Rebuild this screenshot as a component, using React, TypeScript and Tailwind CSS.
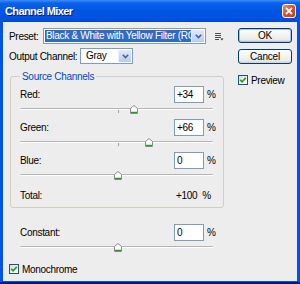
import React from "react";

const FONT = '"Liberation Sans", Arial, sans-serif';

function Thumb({ left }: { left: number }) {
  return (
    <svg
      width="8"
      height="9"
      viewBox="0 0 8 9"
      className="absolute top-[2px]"
      style={{ left: left - 4 }}
    >
      <path d="M0.5 3.5 L4 0.5 L7.5 3.5 V8.5 H0.5 Z" fill="#ffffff" stroke="#8c8c8c" strokeWidth="1" />
      <path d="M1 7.5 H7" stroke="#21a121" strokeWidth="1.5" />
    </svg>
  );
}

function Slider({ value }: { value: number }) {
  const center = 98 + Math.round(value * 0.47);
  return (
    <div className="relative w-[193px] h-[16px]">
      <div className="absolute left-0 right-0 top-[5px] h-[2px] rounded-full border-t border-[#b4b4b4] bg-white" />
      <div className="absolute left-[98px] top-[7px] w-px h-[3px] bg-[#a0a0a0]" />
      <Thumb left={center} />
    </div>
  );
}

function Check({ label }: { label: string }) {
  return (
    <div className="flex items-center h-[10px]">
      <div className="w-[10px] h-[10px] border border-[#1c5180] bg-[linear-gradient(135deg,#dcdcd6,#ffffff)] flex items-center justify-center">
        <svg width="8" height="8" viewBox="0 0 8 8">
          <path d="M1.2 3.8 L3.1 5.8 L6.8 1.8" fill="none" stroke="#21a121" strokeWidth="1.7" />
        </svg>
      </div>
      <span className="ml-[3px] text-[10px] leading-[13px] tracking-[-0.3px] whitespace-nowrap text-black">{label}</span>
    </div>
  );
}

function NumBox({ v }: { v: string }) {
  return (
    <div className="w-[30px] h-[17px] border border-[#7f9db9] bg-white pl-[2px] flex items-center text-[10px] leading-[13px] tracking-[-0.3px]">
      {v}
    </div>
  );
}

function ChannelRow({ label, v, s }: { label: string; v: string; s: number }) {
  return (
    <div>
      <div className="flex items-center h-[17px]">
        <span className="w-[154px] text-[10px] leading-[13px] tracking-[-0.3px]">{label}</span>
        <NumBox v={v} />
        <span className="ml-[3px] text-[10px] leading-[13px]">%</span>
      </div>
      <Slider value={s} />
    </div>
  );
}

function ComboArrow() {
  return (
    <div className="w-[13px] h-full bg-[linear-gradient(to_bottom,#e1eafe,#b7cbf8)] border-l border-[#e8eefc] flex items-center justify-center">
      <svg width="7" height="5" viewBox="0 0 7 5">
        <path d="M0.8 0.8 L3.5 3.5 L6.2 0.8" fill="none" stroke="#4d6185" strokeWidth="1.6" />
      </svg>
    </div>
  );
}

function XPButton({ label, def }: { label: string; def?: boolean }) {
  return (
    <div
      className={
        "w-[54px] h-[15px] rounded-[3px] border border-[#003c74] bg-[linear-gradient(to_bottom,#ffffff,#ecebe6_80%,#d6d0c5)] flex items-center justify-center text-[10px] leading-[13px] tracking-[-0.2px] text-black " +
        (def ? "shadow-[inset_0_0_0_1px_#a9c0ec]" : "")
      }
    >
      {label}
    </div>
  );
}

export default function App() {
  return (
    <div
      className="w-[300px] h-[284px] flex flex-col bg-[#0054e3] border-b-[2px] border-[#00138c]"
      style={{ fontFamily: FONT }}
    >
      {/* Title bar */}
      <div className="h-[22px] flex items-center justify-between pl-[5px] pr-[4px] bg-[linear-gradient(to_bottom,#3d8ef7_0%,#0c61ea_14%,#0055e5_50%,#0051df_85%,#0047d2_100%)]">
        <span className="text-white font-bold text-[11px] leading-[13px] tracking-[-0.6px] [text-shadow:1px_1px_#0a1883]">
          Channel Mixer
        </span>
        <div className="w-[14px] h-[14px] rounded-[3px] border border-white bg-[linear-gradient(135deg,#ea8c6c,#d9502a_50%,#c1401c)] flex items-center justify-center">
          <svg width="8" height="8" viewBox="0 0 8 8">
            <path d="M1 1 L7 7 M7 1 L1 7" stroke="#ffffff" strokeWidth="1.8" />
          </svg>
        </div>
      </div>

      {/* Body */}
      <div className="flex-1 mx-[3px] mb-[1px] bg-[#ededed] flex pl-[6px] text-black">
        {/* Left column */}
        <div className="w-[229px] pt-[6px] flex flex-col">
          {/* Preset */}
          <div className="flex items-center h-[16px]">
            <span className="w-[34px] text-[10px] leading-[13px] tracking-[-0.3px] whitespace-nowrap">Preset:</span>
            <div className="w-[163px] h-[16px] border border-[#7f9db9] bg-white flex p-px">
              <div className="flex-1 min-w-0 bg-[#316ac5] text-white text-[10px] leading-[12px] tracking-[-0.3px] pl-px overflow-hidden whitespace-nowrap flex items-center">
                Black &amp; White with Yellow Filter (RGB)
              </div>
              <ComboArrow />
            </div>
            <svg width="9" height="9" viewBox="0 0 9 9" className="ml-[9px]">
              <path d="M0 1.5 H6 M0 3.5 H6 M0 5.5 H6 M0 7.5 H4" stroke="#505050" strokeWidth="1" />
              <path d="M5.5 6.5 L8.5 6.5 L7 8.5 Z" fill="#303030" />
            </svg>
          </div>
          {/* Output Channel */}
          <div className="flex items-center h-[16px] mt-[4px]">
            <span className="w-[71px] text-[10px] leading-[13px] tracking-[-0.3px] whitespace-nowrap">Output Channel:</span>
            <div className="w-[53px] h-[16px] border border-[#7f9db9] bg-white flex p-px">
              <div className="flex-1 text-[10px] leading-[12px] tracking-[-0.3px] pl-[4px] flex items-center">Gray</div>
              <ComboArrow />
            </div>
          </div>

          {/* Source Channels */}
          <fieldset className="mt-[6px] ml-[1px] w-[214px] border border-[#d0d0bf] rounded-[3px] pl-[9px] pr-0 pt-[3px] pb-[5px] m-0">
            <legend className="px-[2px] text-[10px] leading-[13px] tracking-[-0.3px] text-[#0046d5]">Source Channels</legend>
            <ChannelRow label="Red:" v="+34" s={34} />
            <ChannelRow label="Green:" v="+66" s={66} />
            <ChannelRow label="Blue:" v="0" s={0} />
            <div className="flex items-center h-[13px] mt-[4px] text-[10px] leading-[13px] tracking-[-0.3px]">
              <span className="w-[156px]">Total:</span>
              <span>+100</span>
              <span className="ml-[5px]">%</span>
            </div>
          </fieldset>

          {/* Constant */}
          <div className="mt-[16px] pl-[11px]">
            <ChannelRow label="Constant:" v="0" s={0} />
          </div>

          <div className="mt-[7px]">
            <Check label="Monochrome" />
          </div>
        </div>

        {/* Right column */}
        <div className="pt-[6px] flex flex-col">
          <XPButton label="OK" def />
          <div className="mt-[6px]">
            <XPButton label="Cancel" />
          </div>
          <div className="mt-[11px]">
            <Check label="Preview" />
          </div>
        </div>
      </div>
    </div>
  );
}
